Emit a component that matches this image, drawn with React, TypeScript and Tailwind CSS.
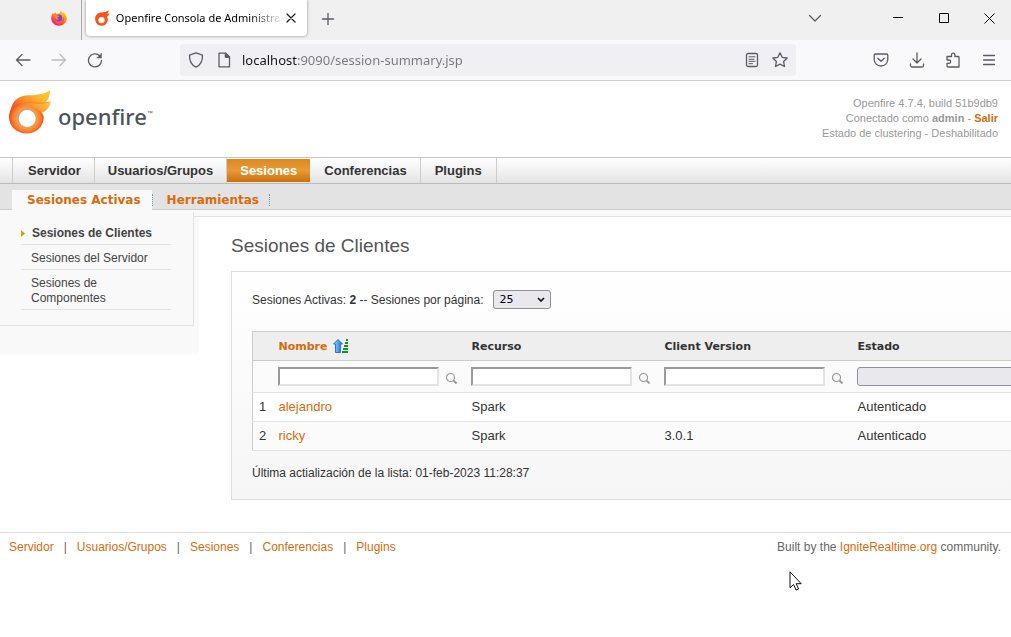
import React from "react";

const arial = "font-['Liberation_Sans',Arial,sans-serif]";
const verdana = "font-['DejaVu_Sans',Verdana,sans-serif]";

function FirefoxIcon() {
  return (
    <svg width="16" height="16" viewBox="0 0 16 16" aria-hidden="true">
      <defs>
        <linearGradient id="fox" x1="0.8" y1="0" x2="0.2" y2="1">
          <stop offset="0" stopColor="#ffe226" />
          <stop offset="0.45" stopColor="#ff8a16" />
          <stop offset="0.75" stopColor="#ff3750" />
          <stop offset="1" stopColor="#e31587" />
        </linearGradient>
      </defs>
      <path fill="url(#fox)" d="M9.600.200c.8.8 1.700 1.900 2 3 .5-.3.500-1 .4-1.400C14 3.200 15.800 5.500 15.800 8.300c0 4.200-3.500 7.500-7.800 7.500S.2 12.500.2 8.300C.2 6 1 4 2.200 2.700c0 .6.2 1.100.5 1.400C3.300 3.200 4 2.500 4.500 2.200c0 .8.400 1.300.9 1.600h2C8.700 3 9.600 2 9.600.2z" />
      <circle cx="7.800" cy="8" r="3.400" fill="#7542e5" />
      <path fill="#ff8a16" d="M3.500 5.300c1.300-.7 2.800-.4 3.800.4h1.200c-.3.900-1.300 1.200-1.900 1.500-.2 1.200.5 1.900 1.700 1.700-1 1.300-3.200 1-3.900-.5-.4-1-.5-2-.9-3.100z" />
      <path fill="#ff5a3c" d="M3.300 8c.6 3 3.500 4.200 5.600 3.700 2-.5 3.300-2.200 2.800-4.600l1.800 1.500c0 3-2.600 5-5.400 5S3.200 11.500 3.300 8z" />
    </svg>
  );
}

function FlameIcon() {
  return (
    <svg width="16" height="16" viewBox="0 0 16 16" aria-hidden="true">
      <path fill="#f9541c" fillRule="evenodd" d="M1.200 9.500C.9 5.500 3.200 2.700 7 2.400c3.200-.2 5.700-.4 8-2.200-.1 1.600-.7 2.800-1.600 3.500.8 0 1.500-.2 2.300-.6-.5 1.800-1.400 3-2.700 3.700 1 1.400 1.200 2.800.8 4.500-.7 2.800-3.200 4.600-6.300 4.500-3.500-.1-6-2.700-6.300-6.300zM7.600 6.900a3.200 3.200 0 1 0 0 6.400 3.200 3.200 0 0 0 0-6.400z" />
    </svg>
  );
}

function OpenfireLogo() {
  return (
    <svg width="44" height="46" viewBox="0 0 44 46" aria-hidden="true">
      <defs>
        <radialGradient id="ball" cx="17.700" cy="29" r="17.500" gradientUnits="userSpaceOnUse">
          <stop offset="0.5" stopColor="#fba544" />
          <stop offset="0.75" stopColor="#f9822f" />
          <stop offset="1" stopColor="#ef4a22" />
        </radialGradient>
        <linearGradient id="upper" x1="0" y1="0.7" x2="1" y2="0.1">
          <stop offset="0" stopColor="#f25a22" />
          <stop offset="0.4" stopColor="#fa9229" />
          <stop offset="0.7" stopColor="#fdb92d" />
          <stop offset="1" stopColor="#ffc936" />
        </linearGradient>
        <linearGradient id="lower" x1="0" y1="0.6" x2="1" y2="0.2">
          <stop offset="0" stopColor="#f4642a" />
          <stop offset="0.5" stopColor="#fb9c35" />
          <stop offset="1" stopColor="#ffc73a" />
        </linearGradient>
      </defs>
      <path fill="url(#upper)" d="M1.500 22C3 11 10 6.500 20 6.200 29 6.200 36 5 41 1c.3 5-1.500 10-5.500 13.500L12 22z" />
      <path fill="url(#ball)" d="M0 28C0 19.500 5 15.500 12 14.200c6-.8 12 .6 17 .8l4 9c1.800 2.500 2 4 1.500 7C33 39 26.500 44.500 18 44.500 7.500 44.500 0 37 0 28z" />
      <path fill="url(#lower)" d="M7 18.500c6-5.500 14-4.600 21-4 5.500 0 10-.5 14-2.300-1.200 6-5 10.200-9.500 11.800C27 17 17 15.500 7 18.500z" />
      <path d="M9 16.500c6-3.600 13-2.800 20-2.300 4.500.1 8-.3 11-1.300" fill="none" stroke="#f47a26" strokeWidth="0.700" />
      <circle cx="17.700" cy="29" r="9.300" fill="#b4a79c" />
      <circle cx="18.200" cy="29.500" r="8.500" fill="#fff" />
    </svg>
  );
}

function Line({ children }: { children: React.ReactNode }) {
  return (
    <svg width="16" height="16" viewBox="0 0 16 16" fill="none" stroke="currentColor" strokeWidth="1.300" strokeLinecap="round" strokeLinejoin="round" aria-hidden="true">
      {children}
    </svg>
  );
}

function SearchIcon() {
  return (
    <svg width="13" height="13" viewBox="0 0 13 13" fill="none" stroke="#999" aria-hidden="true">
      <circle cx="5.500" cy="5.500" r="4" strokeWidth="1.200" />
      <path d="M8.500 8.500l3 3" strokeWidth="1.800" />
    </svg>
  );
}

function SortIcon() {
  return (
    <svg width="16" height="16" viewBox="0 0 16 16" aria-hidden="true">
      <defs>
        <linearGradient id="sort" x1="0" x2="1">
          <stop offset="0" stopColor="#a5d8ff" />
          <stop offset="1" stopColor="#1267c8" />
        </linearGradient>
      </defs>
      <path d="M5 1.500L9.500 6H7.500v8.500h-5V6H.5z" fill="url(#sort)" stroke="#2479cf" />
      <path d="M13 2h2M12 5h3M11 8h4M10 11h5M9 14h6" stroke="#179323" strokeWidth="2" />
    </svg>
  );
}

const iconBtn = "flex size-6 items-center justify-center text-[#5b5b66]";

function Browser() {
  return (
    <header className="font-['Noto_Sans',sans-serif]">
      <div className="flex h-10 bg-[#f0f0f0]">
        <div className="flex w-[82px] shrink-0 items-center justify-end border-r border-[#aaa] pr-[14px] pb-1">
          <FirefoxIcon />
        </div>
        <div className="ml-1 flex h-9 w-[221px] shrink-0 items-center rounded-b bg-white pr-[8px] pl-2 shadow-[0_0_3px_rgba(0,0,0,0.45)]">
          <FlameIcon />
          <span className="ml-[6px] w-[169px] overflow-hidden bg-linear-to-r from-black from-80% to-transparent bg-clip-text text-[11px] whitespace-nowrap text-transparent">
            Openfire Consola de Administración
          </span>
          <button aria-label="Cerrar pestaña" className="flex size-4 shrink-0 items-center justify-center text-[#222]">
            <Line><path d="M4 4l8 8M12 4l-8 8" /></Line>
          </button>
        </div>
        <button aria-label="Nueva pestaña" className="ml-[9px] flex w-6 items-center justify-center pb-[3px] text-[#5b5b66]">
          <Line><path d="M8 2.500v11M2.500 8h11" /></Line>
        </button>
        <div className="ml-auto flex items-center pb-1 text-black">
          <button aria-label="Listar pestañas" className="mr-12 flex w-6 justify-center text-[#5b5b66]">
            <Line><path d="M2.500 5.500L8 11l5.500-5.500" /></Line>
          </button>
          <button aria-label="Minimizar" className="flex w-[46px] justify-center">
            <svg width="10" height="10"><path d="M0 4.500h10" stroke="currentColor" /></svg>
          </button>
          <button aria-label="Maximizar" className="flex w-[46px] justify-center">
            <svg width="10" height="10"><path d="M.5.500h9v9h-9z" stroke="currentColor" fill="none" /></svg>
          </button>
          <button aria-label="Cerrar" className="flex w-[44px] justify-center">
            <svg width="11" height="11"><path d="M.5.500l10 10M10.500.500l-10 10" stroke="currentColor" /></svg>
          </button>
        </div>
      </div>
      <div className="flex h-[41px] items-center border-b border-[#ccc] bg-[#f9f9fb] pr-[10px] pl-[11px]">
        <div className="flex w-[169px] shrink-0 gap-3">
          <button aria-label="Atrás" className={iconBtn}><Line><path d="M15 8H1.500M7 2.500L1.500 8 7 13.500" /></Line></button>
          <button aria-label="Adelante" className="flex size-6 items-center justify-center text-[#bbbbc0]"><Line><path d="M1 8h13.500M9 2.500L14.500 8 9 13.500" /></Line></button>
          <button aria-label="Recargar" className={iconBtn}>
            <Line><path d="M12.800 4A6.500 6.500 0 1 0 14.500 8.500" /><path d="M14.500 1.500V6H10z" fill="currentColor" strokeWidth="0.500" /></Line>
          </button>
        </div>
        <div className="flex h-8 w-[616px] items-center rounded bg-[#f0f0f4] pr-[2px] pl-2 text-[#5b5b66]">
          <Line><path d="M8 .8l6.500 2.400c.2 5.500-2 9.800-6.500 12-4.500-2.200-6.700-6.500-6.500-12z" /></Line>
          <span className="ml-3"><Line><path d="M3 1.200h6.500L13.500 5v9.800H3zM9.500 1.200V5h4" /><path d="M9.500 1.200L13.500 5h-4z" fill="currentColor" /></Line></span>
          <input
            aria-label="Dirección"
            defaultValue="localhost:9090/session-summary.jsp"
            className="ml-[10px] h-6 min-w-0 flex-1 bg-linear-to-r from-[#15141a] from-[55px] to-[#77777d] to-[55px] bg-clip-text text-[13px] leading-6 text-transparent outline-none"
          />
          <button aria-label="Vista de lectura" className="flex w-7 justify-center"><Line><rect x="2.500" y="1.500" width="11" height="13" rx="1.500" /><path d="M5 4.800h6M5 7.300h5M5 9.300h6M5 11.700h3.500" strokeWidth="1" /></Line></button>
          <button aria-label="Guardar marcador" className="flex w-7 justify-center">
            <Line><path d="M8 .8l2.200 4.500 5 .7-3.600 3.500.9 5L8 12.100l-4.500 2.400.9-5L.8 6l5-.7z" /></Line>
          </button>
        </div>
        <div className="ml-auto flex gap-3">
          <button aria-label="Guardar en Pocket" className={iconBtn}><Line><path d="M2.500 2h11Q14.800 2 14.800 3.300V7.500a6.800 6.500 0 0 1-13.600 0V3.300Q1.200 2 2.500 2zM4.800 6.200L8 9.200l3.200-3" /></Line></button>
          <button aria-label="Descargas" className={iconBtn}><Line><path d="M8 1v9.500M4 7l4 4 4-4M1.500 12v1.500q0 1.500 1.500 1.500h10q1.500 0 1.500-1.500V12" /></Line></button>
          <button aria-label="Extensiones" className={iconBtn}>
            <Line><path d="M2 6.500V4.500h4.500V2.800a1.700 1.700 0 0 1 3.400 0v1.700h3.600Q14 4.500 14 5.500V15H3.500Q2 15 2 13.700V11.300h2a1.600 1.600 0 0 0 0-3.300H2z" /></Line>
          </button>
          <button aria-label="Menú" className={iconBtn}><Line><path d="M2.500 3.500h11M2.500 8h11M2.500 12.500h11" /></Line></button>
        </div>
      </div>
    </header>
  );
}

const tabs = ["Servidor", "Usuarios/Grupos", "Sesiones", "Conferencias", "Plugins"];

function PageHeader() {
  return (
    <>
      <div className="flex h-[76px] justify-between pr-[13px] pl-[9px]">
        <a href="#inicio" className="flex pt-[8px]" aria-label="openfire">
          <OpenfireLogo />
          <span className="mt-[10px] ml-[5px] font-['Noto_Sans',sans-serif] text-[22px] leading-[34px] font-medium text-[#4b5558]">openfire</span>
          <span className="mt-[19px] text-[6px] leading-[10px] text-[#4b5558]">™</span>
        </a>
        <div className="pt-[15px] text-right text-[11px] leading-[15px] text-[#999]">
          <p>Openfire 4.7.4, build 51b9db9</p>
          <p>Conectado como <b>admin</b> - <a href="#salir" className="font-bold text-[#d76c0d]">Salir</a></p>
          <p>Estado de clustering - Deshabilitado</p>
        </div>
      </div>
      <nav className="flex h-[27px] border-y border-t-[#c6c6c6] border-b-[#bbb] bg-linear-to-b from-white to-[#e4e4e4] pl-3 text-[13px] leading-[25px] font-bold text-[#333]">
        {tabs.map((t) => (
          <a
            key={t}
            href={"#" + t}
            className={
              t === "Sesiones"
                ? "mt-px mr-px h-[23px] bg-linear-to-b from-[#dc8a20] via-[#e89a35] to-[#c9700a] px-[13px] leading-[23px] text-white"
                : "border-r border-[#ccc] px-[13px] first:border-l first:pl-[15px] last:px-[14px]"
            }
          >
            {t}
          </a>
        ))}
      </nav>
      <nav className={"flex h-[26px] border-b border-[#ccc] bg-[#e3e3e3] pt-[6px] pl-3 text-[12px] font-bold text-[#d76c0d] " + verdana}>
        <a href="#activas" className="h-[20px] bg-[#f9f9f9] pr-[11px] pl-[15px] leading-[20px]">Sesiones Activas</a>
        <a href="#herramientas" className="my-1 h-3 border-x border-dotted border-[#7595a0] pr-[10px] pl-[14px] leading-3">Herramientas</a>
      </nav>
    </>
  );
}

function Sidebar() {
  return (
    <aside className="h-[137px] w-[199px] shrink-0 bg-[#f9f9f9] text-[12px] leading-[15px] text-[#444]">
      <nav className="h-[109px] w-[194px] border-r border-b border-[#e2e2e2] pt-[3px] pl-[21px]">
        <a href="#clientes" className="flex h-[25px] w-[150px] items-center border-b border-[#e2e2e2] pt-[2px] font-bold">
          <svg width="11" height="7" aria-hidden="true"><path d="M0 0l4 3.500L0 7z" fill="#d4a008" /></svg>
          Sesiones de Clientes
        </a>
        <a href="#servidor" className="flex h-[25px] w-[150px] items-center border-b border-[#e2e2e2] pt-[2px] pl-[10px]">Sesiones del Servidor</a>
        <a href="#componentes" className="flex h-[40px] w-[150px] items-center border-b border-[#e2e2e2] pt-[2px] pr-10 pl-[10px]">Sesiones de Componentes</a>
      </nav>
    </aside>
  );
}

const columns = ["Nombre", "Recurso", "Client Version", "Estado"];
const rows = [
  ["1", "alejandro", "Spark", "", "Autenticado"],
  ["2", "ricky", "Spark", "3.0.1", "Autenticado"],
];

function Sessions() {
  return (
    <main className="min-w-0 flex-1 overflow-hidden pl-8">
      <h1 className="pt-[17px] text-[19px] leading-[24px] text-[#555]">Sesiones de Clientes</h1>
      <section className="mt-[13px] h-[229px] min-w-[850px] border border-[#ddd] bg-linear-to-b from-white to-[#f6f6f6] pl-5 text-[12px] leading-[15px] text-[#333]">
        <div className="flex items-center pt-[18px]">
          <label htmlFor="size" className="pt-px">Sesiones Activas: <b>2</b> -- Sesiones por página:</label>
          <div className="relative ml-[10px] flex items-center">
            <select id="size" className={"h-[19px] w-[58px] appearance-none rounded-[3px] border border-[#8f8f9d] bg-[#e9e9ed] pl-[5px] text-[11px] leading-none text-black " + verdana}>
              <option>25</option>
              <option>50</option>
            </select>
            <svg className="pointer-events-none absolute right-[6px]" width="8" height="6" aria-hidden="true"><path d="M1 1l3 3 3-3" fill="none" stroke="#111" strokeWidth="1.600" /></svg>
          </div>
        </div>
        <table className="mt-[22px] w-[828px] table-fixed border-collapse border border-[#ccc] text-left text-[13px]">
          <colgroup>
            <col className="w-[20px]" />
            <col className="w-[193px]" />
            <col className="w-[193px]" />
            <col className="w-[193px]" />
            <col />
          </colgroup>
          <thead>
            <tr className={"h-[29px] border-b border-[#ccc] bg-[#eee] text-[11px] " + verdana}>
              <th />
              {columns.map((c, i) => (
                <th key={c} className="p-0 pl-[6px]">
                  {i === 0 ? (
                    <a href="#orden" className="flex items-center gap-[6px] text-[#d76c0d]">{c}<SortIcon /></a>
                  ) : c}
                </th>
              ))}
            </tr>
            <tr className="h-[32px] border-b border-[#e2e2e2]">
              <td />
              {columns.map((c, i) => (
                <td key={c} className="p-0 pl-[5px]">
                  {i < 3 ? (
                    <div className="flex items-center">
                      <input aria-label={c} className="h-[19px] w-[161px] border-2 border-t-[#999] border-r-[#e3e3e3] border-b-[#e3e3e3] border-l-[#999] bg-white px-1" />
                      <button aria-label={"Buscar " + c} className="mt-1 ml-[6px]"><SearchIcon /></button>
                    </div>
                  ) : (
                    <select aria-label={c} className="block h-[19px] w-[180px] appearance-none rounded-[3px] border border-[#8f8f9d] bg-[#e9e9ed]"><option /></select>
                  )}
                </td>
              ))}
            </tr>
          </thead>
          <tbody>
            {rows.map((r) => (
              <tr key={r[0]} className="h-[29px] border-b border-[#e2e2e2] odd:bg-white even:bg-[#fbfbfb]">
                {r.map((v, i) => (
                  <td key={i} className="p-0 pb-[2px] pl-[6px]">
                    {i === 1 ? <a href={"#" + v} className="text-[#d76c0d]">{v}</a> : v}
                  </td>
                ))}
              </tr>
            ))}
          </tbody>
        </table>
        <p className="mt-[15px]">Última actialización de la lista: 01-feb-2023 11:28:37</p>
      </section>
    </main>
  );
}

function Footer() {
  return (
    <footer className="relative mt-8 flex justify-between border-t border-[#ddd] pt-[7px] pr-[10px] pl-[9px] text-[12px] leading-[15px] text-[#d76c0d]">
      <nav className="flex">
        {tabs.map((t, i) => (
          <React.Fragment key={t}>
            {i > 0 && <span className="px-[10px] text-[#666]">|</span>}
            <a href={"#pie-" + t}>{t}</a>
          </React.Fragment>
        ))}
      </nav>
      <p className="text-[#666]">Built by the <a href="#ignite" className="text-[#d76c0d]">IgniteRealtime.org</a> community.</p>
      <svg className="absolute top-[38px] right-[209px]" width="13" height="20" viewBox="0 0 13 20" aria-hidden="true">
        <path d="M1 .800v16l3.600-3.300 2.500 5.600 2.500-1.100-2.400-5.300h5z" fill="#fff" stroke="#111" />
      </svg>
    </footer>
  );
}

export default function App() {
  return (
    <div className={"min-h-screen overflow-hidden bg-white " + arial}>
      <Browser />
      <PageHeader />
      <div className="flex h-[7px] bg-[#f9f9f9]">
        <div className="mt-[2px] ml-[193px] flex-1 border-b border-l border-[#e2e2e2]" />
      </div>
      <div className="flex">
        <Sidebar />
        <Sessions />
      </div>
      <Footer />
    </div>
  );
}
